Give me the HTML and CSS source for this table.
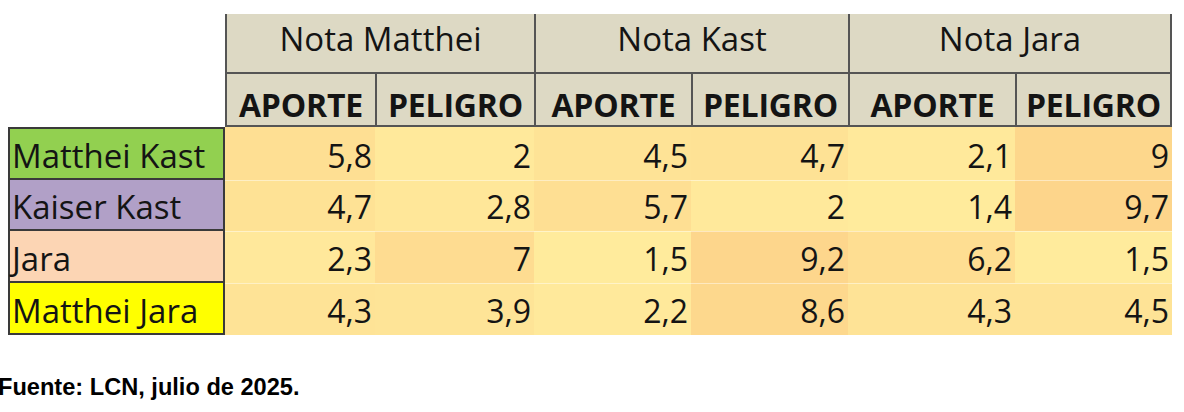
FILE: index.html
```html
<!DOCTYPE html>
<html lang="es">
<head>
<meta charset="utf-8">
<title>Notas</title>
<link rel="stylesheet" href="styles.css">
</head>
<body>
<div class="sheet">
  <div class="blank r1"></div>
  <div class="group">Nota Matthei</div>
  <div class="group">Nota Kast</div>
  <div class="group last">Nota Jara</div>

  <div class="blank r2"></div>
  <div class="sub">APORTE</div>
  <div class="sub">PELIGRO</div>
  <div class="sub">APORTE</div>
  <div class="sub">PELIGRO</div>
  <div class="sub">APORTE</div>
  <div class="sub last">PELIGRO</div>

  <div class="label first green">Matthei Kast</div>
  <div class="num" style="background:#FEDF93">5,8</div>
  <div class="num" style="background:#FFE99B">2</div>
  <div class="num" style="background:#FEE396">4,5</div>
  <div class="num" style="background:#FEE295">4,7</div>
  <div class="num" style="background:#FFE99B">2,1</div>
  <div class="num" style="background:#FDD78C">9</div>

  <div class="label purple">Kaiser Kast</div>
  <div class="num sep" style="background:#FEE295">4,7</div>
  <div class="num sep" style="background:#FFE799">2,8</div>
  <div class="num sep" style="background:#FEDF93">5,7</div>
  <div class="num sep" style="background:#FFE99B">2</div>
  <div class="num sep" style="background:#FFEB9C">1,4</div>
  <div class="num sep" style="background:#FDD58B">9,7</div>

  <div class="label peach">Jara</div>
  <div class="num sep" style="background:#FFE89B">2,3</div>
  <div class="num sep" style="background:#FEDC91">7</div>
  <div class="num sep" style="background:#FFEB9C">1,5</div>
  <div class="num sep" style="background:#FDD68C">9,2</div>
  <div class="num sep" style="background:#FEDE92">6,2</div>
  <div class="num sep" style="background:#FFEB9C">1,5</div>

  <div class="label yellow">Matthei Jara</div>
  <div class="num sep" style="background:#FEE396">4,3</div>
  <div class="num sep" style="background:#FEE497">3,9</div>
  <div class="num sep" style="background:#FFE99B">2,2</div>
  <div class="num sep" style="background:#FDD88D">8,6</div>
  <div class="num sep" style="background:#FEE396">4,3</div>
  <div class="num sep" style="background:#FEE396">4,5</div>
</div>
<p class="source">Fuente: LCN, julio de 2025.</p>
</body>
</html>
```

FILE: styles.css
```css
html, body {
  margin: 0;
  padding: 0;
  background: #ffffff;
}

body {
  font-family: "Open Sans", "Liberation Sans", sans-serif;
  color: #141414;
}

.sheet {
  display: grid;
  grid-template-columns: 217px 150px 159px 157px 157px 167px 157px;
  grid-template-rows: 60px 53px 53px 51px 52px 52px;
  margin: 14px 0 0 8px;
  width: max-content;
}

.sheet > div {
  box-sizing: border-box;
  display: flex;
  align-items: flex-end;
  min-width: 0;
}

.blank {
  background: #ffffff;
}

.group {
  grid-column: span 2;
  justify-content: center;
  background: #DDD9C4;
  border-left: 2px solid #555555;
  border-bottom: 2px solid #555555;
  font-size: 33px;
  line-height: 33px;
  padding-bottom: 17px;
}

.sub {
  justify-content: center;
  background: #DDD9C4;
  border-left: 2px solid #555555;
  border-bottom: 2px solid #555555;
  font-weight: 700;
  font-size: 32px;
  line-height: 32px;
  padding-bottom: 4px;
  letter-spacing: -0.2px;
}

.group.last,
.sub.last {
  border-right: 2px solid #555555;
}

.label {
  border-left: 2px solid #3a3a3a;
  border-right: 2px solid #3a3a3a;
  border-bottom: 2px solid #3a3a3a;
  font-size: 33px;
  line-height: 33px;
  padding: 0 0 6px 2px;
  white-space: nowrap;
}

.label.first {
  border-top: 2px solid #3a3a3a;
}

.green { background: #92D050; }
.purple { background: #B1A0C7; }
.peach { background: #FCD5B4; }
.yellow { background: #FFFF00; }

.num {
  justify-content: flex-end;
  font-size: 32px;
  line-height: 32px;
  padding: 0 3px 8px 0;
}

.num.sep {
  box-shadow: inset 0 1px 0 rgba(255, 255, 255, 0.45);
}

.source {
  margin: 39px 0 0 -2px;
  font-family: "Liberation Sans", Arial, sans-serif;
  font-weight: 700;
  font-size: 23.6px;
  line-height: 26px;
  color: #000000;
}
```
